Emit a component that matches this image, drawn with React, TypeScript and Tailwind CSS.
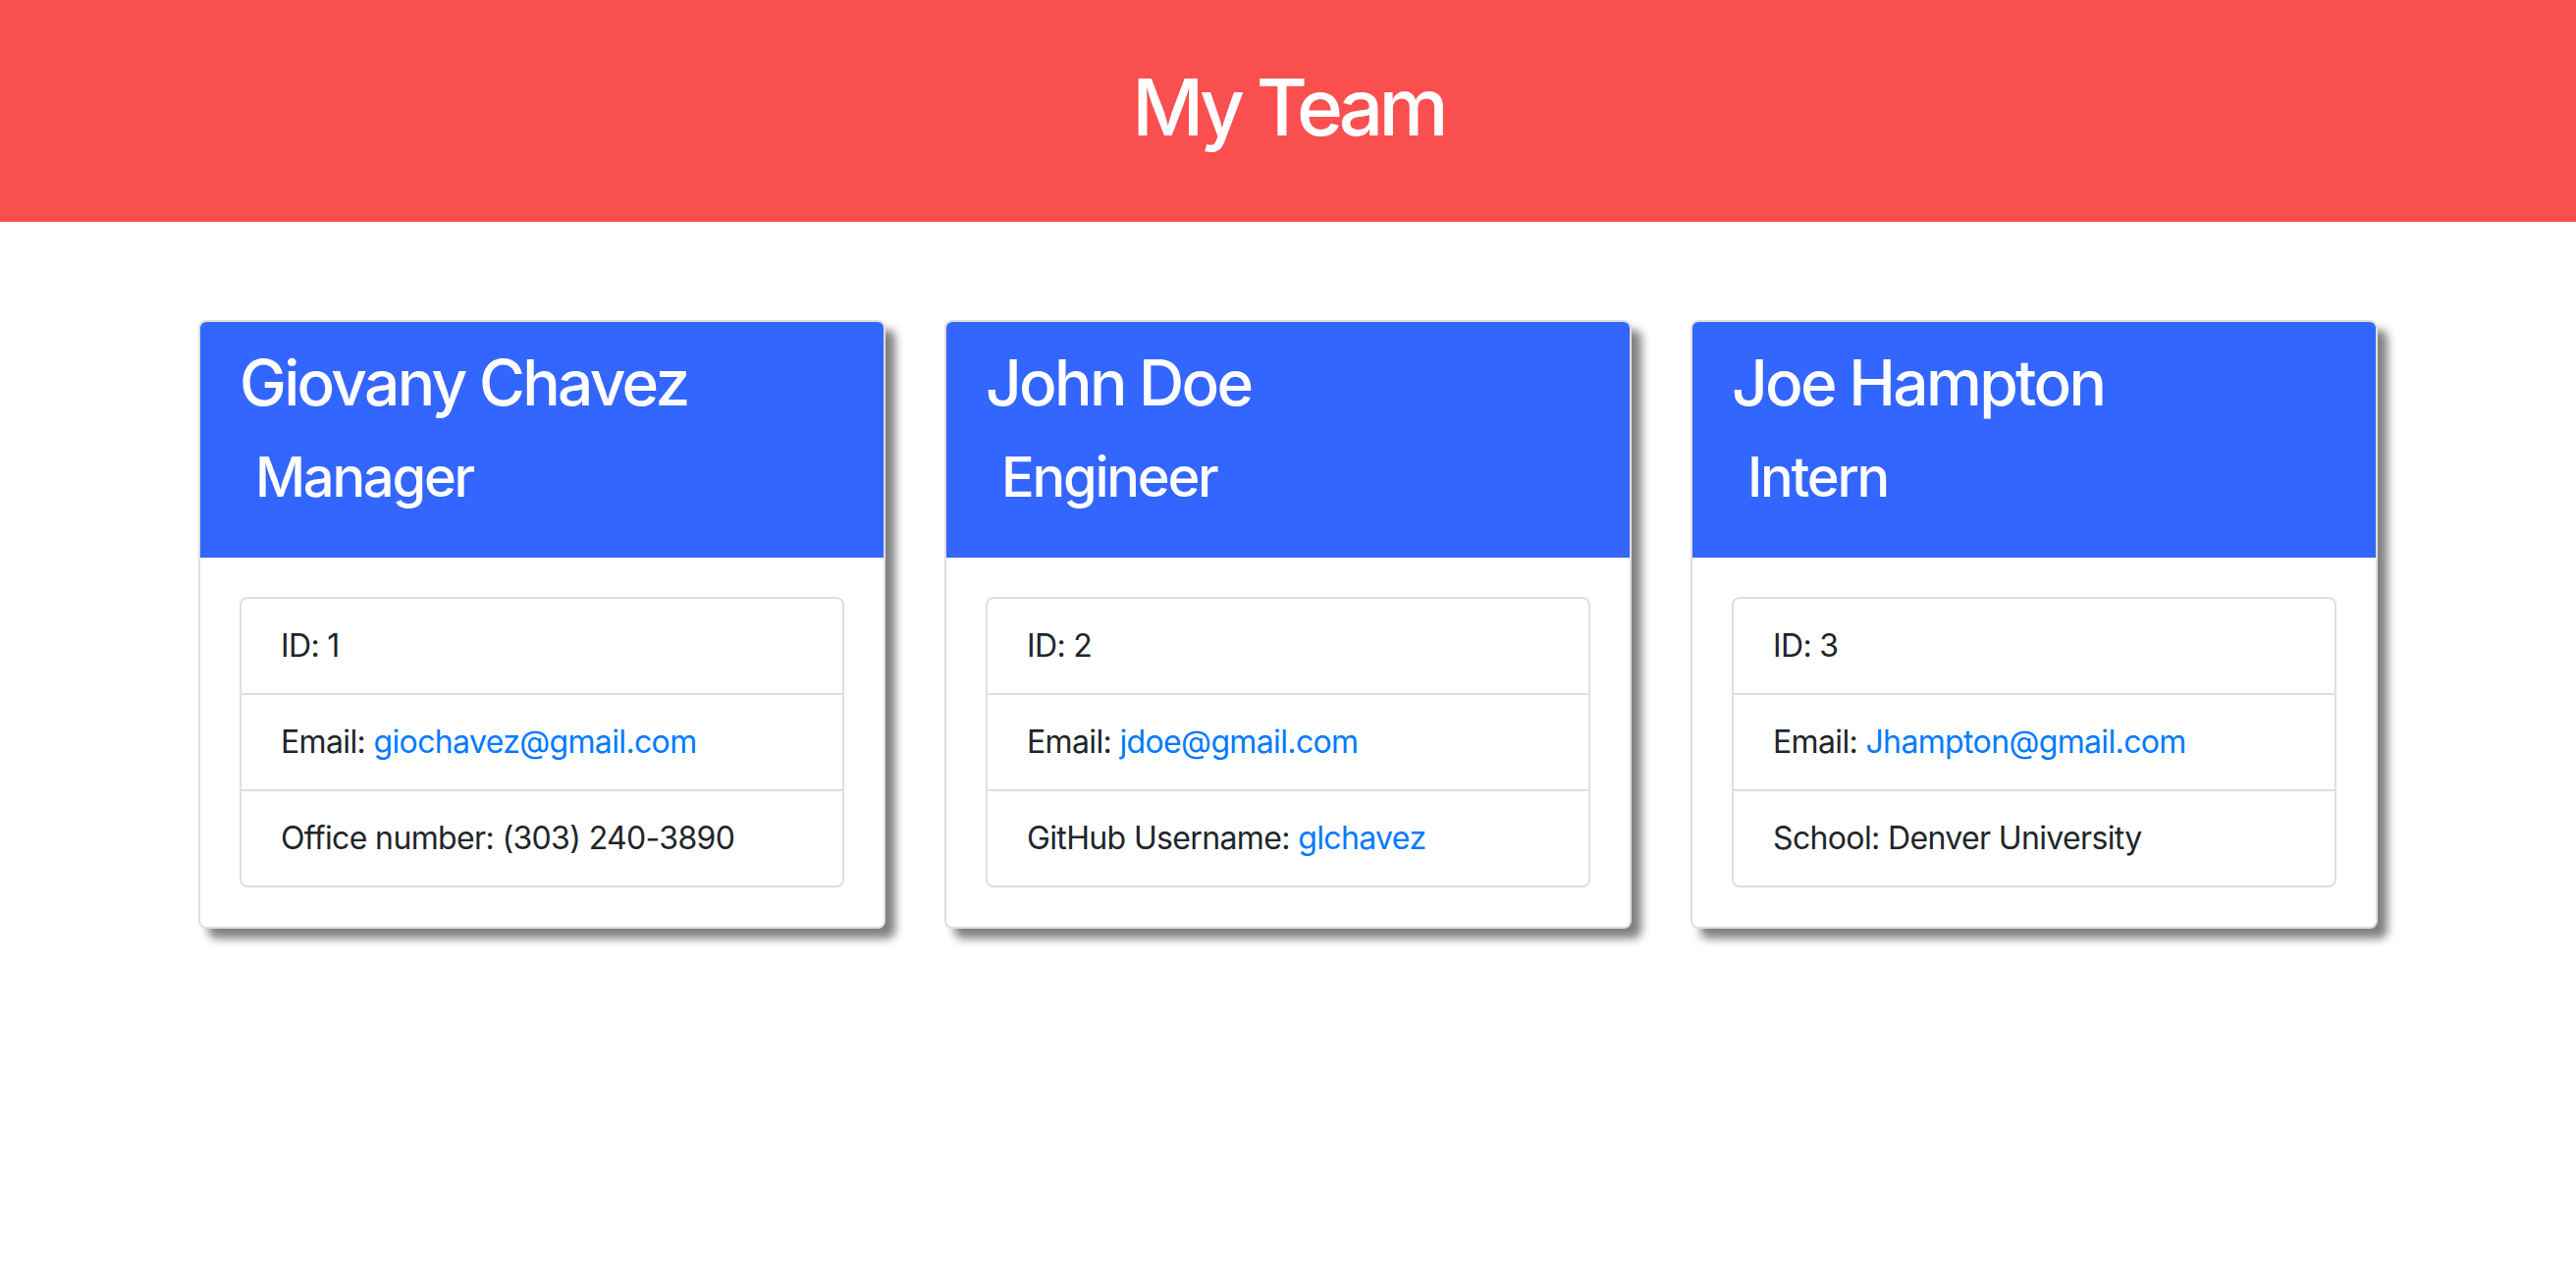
import React from "react";

type Member = {
  name: string;
  role: string;
  id: number;
  email: string;
  extraLabel: string;
  extraValue: string;
  extraLink?: boolean;
};

const team: Member[] = [
  {
    name: "Giovany Chavez",
    role: "Manager",
    id: 1,
    email: "giochavez@gmail.com",
    extraLabel: "Office number",
    extraValue: "(303) 240-3890",
  },
  {
    name: "John Doe",
    role: "Engineer",
    id: 2,
    email: "jdoe@gmail.com",
    extraLabel: "GitHub Username",
    extraValue: "glchavez",
    extraLink: true,
  },
  {
    name: "Joe Hampton",
    role: "Intern",
    id: 3,
    email: "Jhampton@gmail.com",
    extraLabel: "School",
    extraValue: "Denver University",
  },
];

function MemberCard({ m }: { m: Member }) {
  return (
    <div className="rounded-[8px] border-2 border-[#dfdfdf] bg-white shadow-[10px_10px_10px_#808080]">
      <div className="rounded-t-[6px] bg-[#3366ff] px-10 pt-6 pb-8 text-white">
        <h2 className="mb-6 text-[64px] leading-[1.2] font-medium tracking-[-0.042em]">{m.name}</h2>
        <h3 className="mb-4 ml-4 text-[56px] leading-[1.2] font-medium tracking-[-0.04em]">{m.role}</h3>
      </div>
      <div className="p-10">
        <ul className="rounded-[8px] border-2 border-[#dfdfdf] text-[32px] leading-[48px] tracking-[-0.02em] text-[#212529]">
          <li className="px-10 py-6">ID: {m.id}</li>
          <li className="border-t-2 border-[#dfdfdf] px-10 py-6">
            Email: <a href="#" className="text-[#007bff]">{m.email}</a>
          </li>
          <li className="border-t-2 border-[#dfdfdf] px-10 py-6">
            {m.extraLabel}:{" "}
            {m.extraLink ? (
              <a href="#" className="text-[#007bff]">{m.extraValue}</a>
            ) : (
              m.extraValue
            )}
          </li>
        </ul>
      </div>
    </div>
  );
}

export default function App() {
  return (
    <div className="min-h-screen bg-white font-['Inter',sans-serif]">
      <header className="flex h-[226px] items-center justify-center bg-[#fa4f4f] pb-2">
        <h1 className="text-[80px] leading-[1.2] font-medium tracking-[-0.06em] text-white">My Team</h1>
      </header>
      <main className="mx-auto w-[2280px] pt-[100px]">
        <div className="grid grid-cols-3">
          {team.map((m) => (
            <div key={m.id} className="px-[30px]">
              <MemberCard m={m} />
            </div>
          ))}
        </div>
      </main>
    </div>
  );
}
